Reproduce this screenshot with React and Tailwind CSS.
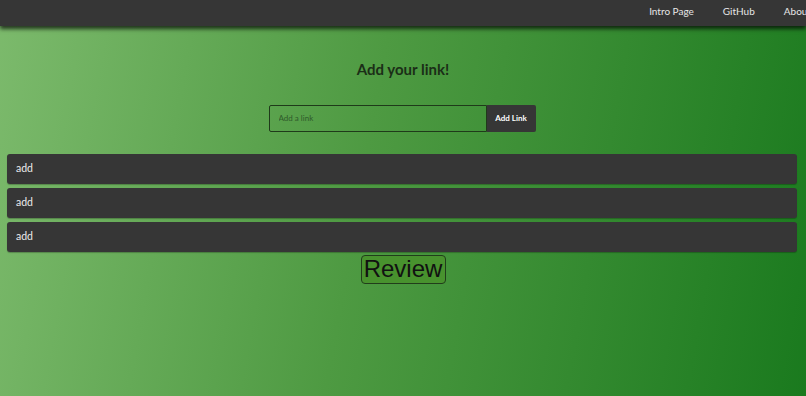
import React from 'react';

const links = ['add', 'add', 'add'];

const App = () => {
  return (
    <div className="min-h-[396px] w-full overflow-hidden bg-[linear-gradient(100deg,#7cba6c_0%,#4e9a42_45%,#1a7a1e_100%)] font-['Lato',sans-serif]">
      {/* Nav */}
      <nav className="relative z-10 flex h-[26px] items-center justify-end bg-[#363636] shadow-[0_3px_4px_rgba(0,0,0,0.7)]">
        <div className="flex translate-x-[5px] gap-[29px] pb-[4px] text-[10px] text-[#e6e6e6]">
          <a>Intro Page</a>
          <a>GitHub</a>
          <a>About</a>
        </div>
      </nav>

      <div className="flex flex-col items-center pt-[32px]">
        <h2 className="text-[15px] font-bold text-[#1b2e17]">Add your link!</h2>

        {/* Input */}
        <div className="mt-[24px] flex h-[27px] w-[267px] -translate-x-[1px]">
          <input
            placeholder="Add a link"
            className="h-full flex-1 rounded-l-[2px] border border-[#1f3a1a] bg-transparent px-[9px] text-[8px] text-black outline-none placeholder:text-[#2f5a2a]"
          />
          <button className="h-full w-[49px] rounded-r-[2px] bg-[#363636] text-[8px] font-bold text-white">
            Add Link
          </button>
        </div>
      </div>

      {/* List */}
      <div className="mt-[22px] flex flex-col gap-[4px] pl-[7px] pr-[9px]">
        {links.map((l, i) => (
          <div
            key={i}
            className="flex h-[30px] items-center rounded-[3px] bg-[#363636] px-[9px] text-[10.5px] text-[#ececec] shadow-[0_1px_1px_rgba(0,0,0,0.25)]"
          >
            {l}
          </div>
        ))}
      </div>

      <div className="flex justify-center pt-[3px]">
        <button className="h-[29px] w-[85px] rounded-[4px] border border-[#213d1b] bg-[#48922e] font-['Liberation_Sans',sans-serif] text-[24px] leading-none text-[#111]">
          Review
        </button>
      </div>
    </div>
  );
};

export default App;
